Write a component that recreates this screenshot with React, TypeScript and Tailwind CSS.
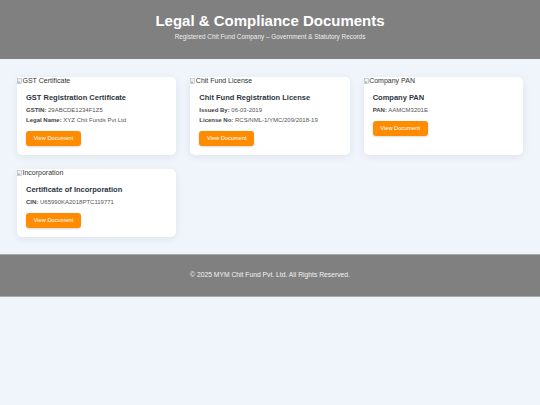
import React from "react";

type Doc = {
  alt: string;
  title: string;
  fields: { label: string; value: string }[];
};

const docs: Doc[] = [
  {
    alt: "GST Certificate",
    title: "GST Registration Certificate",
    fields: [
      { label: "GSTIN:", value: "29ABCDE1234F1Z5" },
      { label: "Legal Name:", value: "XYZ Chit Funds Pvt Ltd" },
    ],
  },
  {
    alt: "Chit Fund License",
    title: "Chit Fund Registration License",
    fields: [
      { label: "Issued By:", value: "06-03-2019" },
      { label: "License No:", value: "RCS/NML-1/YMC/209/2018-19" },
    ],
  },
  {
    alt: "Company PAN",
    title: "Company PAN",
    fields: [{ label: "PAN:", value: "AAMCM3201E" }],
  },
  {
    alt: "Incorporation",
    title: "Certificate of Incorporation",
    fields: [{ label: "CIN:", value: "U65990KA2018PTC119771" }],
  },
];

function BrokenImage({ alt }: { alt: string }) {
  return (
    <div className="h-[8px] flex items-center text-[7px] leading-[8px] text-[#333]">
      <span className="bg-white flex items-center pr-[1px]">
        <svg width="5" height="6" viewBox="0 0 5 6" className="mr-[0.5px]">
          <rect x="0.3" y="0.3" width="4.4" height="5.4" fill="#eef2f6" stroke="#a0a8b0" strokeWidth="0.5" />
          <path d="M0.8 4.8 L2 3 L3.2 4.8 Z" fill="#7a9" />
        </svg>
        {alt}
      </span>
    </div>
  );
}

function DocCard({ doc }: { doc: Doc }) {
  return (
    <div className="bg-white rounded-[5px] shadow-[0_2px_8px_rgba(0,0,0,0.07)] flex flex-col">
      <BrokenImage alt={doc.alt} />
      <div className="px-[9px] pt-[8px] pb-[9px]">
        <h3 className="text-[7.5px] leading-[9px] font-bold text-[#2c3440]">{doc.title}</h3>
        <div className="mt-[3px]">
          {doc.fields.map((f) => (
            <p key={f.label} className="text-[6px] leading-[10px] text-[#555]">
              <span className="font-bold text-[#444]">{f.label}</span> {f.value}
            </p>
          ))}
        </div>
        <button className="block mt-[6px] h-[15px] w-[55px] rounded-[3px] bg-[#ff8c00] text-white text-[5.7px] leading-[15px] shadow-[0_1px_2px_rgba(0,0,0,0.15)]">
          View Document
        </button>
      </div>
    </div>
  );
}

export default function App() {
  return (
    <div className="min-h-[405px] bg-[#f0f4fb] font-['Liberation_Sans',Arial,sans-serif]">
      <header className="bg-[#808080] h-[59px] pt-[12px] text-center">
        <h1 className="text-[15px] leading-[18px] font-bold text-white">Legal &amp; Compliance Documents</h1>
        <p className="text-[6.4px] leading-[9px] text-[#eee] mt-[2px]">
          Registered Chit Fund Company – Government &amp; Statutory Records
        </p>
      </header>
      <main className="px-[17px] pt-[18px] pb-[17px] grid grid-cols-3 gap-[14px]">
        {docs.map((d) => (
          <DocCard key={d.alt} doc={d} />
        ))}
      </main>
      <footer className="bg-[#808080] h-[43px] border-y border-[#aaa] flex items-center justify-center text-[6.75px] text-[#f2f2f2]">
        © 2025 MYM Chit Fund Pvt. Ltd. All Rights Reserved.
      </footer>
    </div>
  );
}
